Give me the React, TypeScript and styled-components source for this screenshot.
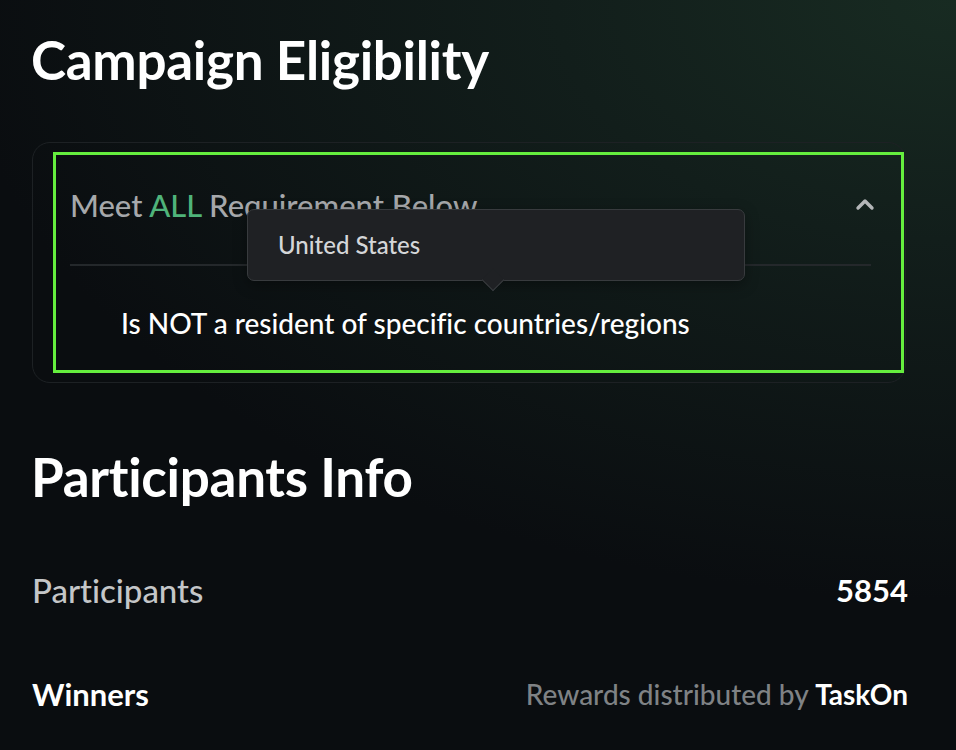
import { createGlobalStyle } from "styled-components";
import styled from "styled-components";

const GlobalStyle = createGlobalStyle`
  html, body {
    margin: 0;
    padding: 0;
    background: #0a0d10;
  }
  body {
    font-family: Lato, "Noto Sans", sans-serif;
    font-variant-ligatures: none;
    color: #ffffff;
  }
`;

function App() {
  return (
    <Page>
      <GlobalStyle />
      <Title>Campaign Eligibility</Title>
      <Card>
        <CardHeader>
          <HeaderText>
            Meet <Accent>ALL</Accent> Requirement Below
          </HeaderText>
          <ChevronUp width={20} height={14} viewBox="0 0 20 14">
            <path
              d="M3 11 L10 4 L17 11"
              fill="none"
              stroke="#b4b6b8"
              strokeWidth={3.4}
              strokeLinecap="round"
              strokeLinejoin="round"
            />
          </ChevronUp>
        </CardHeader>
        <Divider />
        <Requirement>Is NOT a resident of specific countries/regions</Requirement>
        <Highlight />
        <Tooltip>
          United States
          <TooltipArrow />
        </Tooltip>
      </Card>

      <SectionTitle>Participants Info</SectionTitle>
      <InfoRow>
        <InfoLabel>Participants</InfoLabel>
        <InfoValue>5854</InfoValue>
      </InfoRow>
      <InfoRow $tall>
        <InfoLabel $strong>Winners</InfoLabel>
        <Distributed>
          Rewards distributed by <Brand>TaskOn</Brand>
        </Distributed>
      </InfoRow>
    </Page>
  );
}

export default App;

const Page = styled.div`
  width: 956px;
  height: 750px;
  overflow: hidden;
  box-sizing: border-box;
  padding: 24px 50px 0 32px;
  background:
    radial-gradient(ellipse 1000px 600px at 100% 0%, #182b22 0%, #121e1b 40%, rgba(10, 13, 16, 0) 100%),
    #0a0d10;
`;

const Title = styled.h1`
  margin: 0 0 0 -1px;
  font-size: 53px;
  font-weight: 700;
  line-height: 72px;
  letter-spacing: -0.3px;
  color: #ffffff;
`;

const Card = styled.div`
  position: relative;
  margin-top: 46px;
  width: 874px;
  height: 241px;
  box-sizing: border-box;
  border: 1.5px solid #1d2124;
  border-radius: 18px;
  padding: 37px 30px 0 37px;
`;

const CardHeader = styled.div`
  display: flex;
  align-items: center;
  justify-content: space-between;
  height: 50px;
`;

const HeaderText = styled.div`
  font-size: 31px;
  font-weight: 500;
  line-height: 40px;
  color: #a6a8ab;
`;

const Accent = styled.span`
  color: #4fb37a;
`;

const ChevronUp = styled.svg`
  margin-right: 0;
  margin-top: -2px;
`;

const Divider = styled.div`
  margin-top: 34px;
  height: 1.5px;
  background: #24282b;
  margin-right: 4px;
`;

const Requirement = styled.div`
  margin-top: 40px;
  padding-left: 51px;
  font-size: 28px;
  font-weight: 500;
  line-height: 34px;
  color: #ffffff;
`;

const Highlight = styled.div`
  position: absolute;
  left: 20px;
  top: 9px;
  right: 1px;
  bottom: 9px;
  border: 3.5px solid #65ee3e;
  pointer-events: none;
`;

const Tooltip = styled.div`
  position: absolute;
  left: 214px;
  top: 66px;
  width: 498px;
  height: 72px;
  box-sizing: border-box;
  padding: 20px 0 0 30px;
  background: #1f2124;
  border: 1.5px solid #383b3e;
  border-radius: 7px;
  font-size: 24px;
  font-weight: 500;
  line-height: 30px;
  color: #d4d6d8;
  box-shadow: 0 4px 14px rgba(0, 0, 0, 0.35);
`;

const TooltipArrow = styled.span`
  position: absolute;
  left: 237px;
  bottom: -8px;
  width: 15px;
  height: 15px;
  background: #1f2124;
  border-right: 1.5px solid #383b3e;
  border-bottom: 1.5px solid #383b3e;
  transform: rotate(45deg);
`;

const SectionTitle = styled.h2`
  margin: 58px 0 0 -1px;
  font-size: 53px;
  font-weight: 700;
  line-height: 72px;
  letter-spacing: -0.3px;
  color: #ffffff;
`;

const InfoRow = styled.div<{ $tall?: boolean }>`
  display: flex;
  align-items: center;
  justify-content: space-between;
  width: 876px;
  margin-top: ${(p) => (p.$tall ? "58px" : "54px")};
  height: 46px;
`;

const InfoLabel = styled.div<{ $strong?: boolean }>`
  font-size: ${(p) => (p.$strong ? "31px" : "33px")};
  font-weight: ${(p) => (p.$strong ? 700 : 500)};
  color: ${(p) => (p.$strong ? "#ffffff" : "#c4c6c8")};
`;

const InfoValue = styled.div`
  font-size: 31px;
  font-weight: 700;
  color: #ffffff;
`;

const Distributed = styled.div`
  font-size: 28px;
  font-weight: 500;
  color: #7f8285;
`;

const Brand = styled.span`
  color: #ffffff;
  font-weight: 700;
`;
